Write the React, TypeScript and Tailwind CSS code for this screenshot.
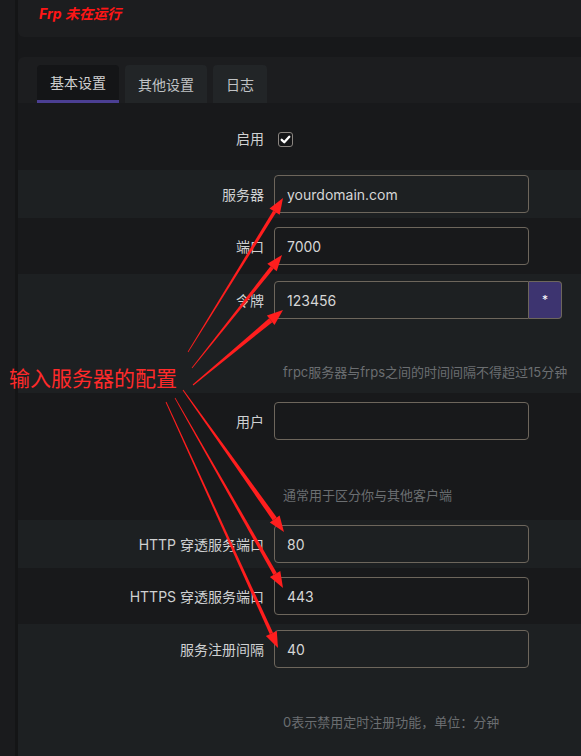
import type { ReactNode } from "react";
import clsx from "clsx";

type Pt = [number, number];

// annotation arrows: start of the tapered shaft, tip of the head
const arrows: { s: Pt; t: Pt; w0: number; w1: number }[] = [
  { s: [188, 352], t: [283, 198], w0: 0.8, w1: 3.5 },
  { s: [192, 368], t: [282, 255], w0: 0.8, w1: 4 },
  { s: [193, 385], t: [283, 310], w0: 1, w1: 5 },
  { s: [183, 390], t: [284, 532], w0: 1, w1: 5 },
  { s: [175, 398], t: [283, 588], w0: 0.8, w1: 4 },
  { s: [166, 402], t: [278, 648], w0: 0.8, w1: 3.5 },
];

function arrowPolys(s: Pt, t: Pt, w0: number, w1: number) {
  const dx = t[0] - s[0];
  const dy = t[1] - s[1];
  const len = Math.hypot(dx, dy);
  const ux = dx / len;
  const uy = dy / len;
  const nx = -uy;
  const ny = ux;
  const head = 16;
  const hw = 6;
  const bx = t[0] - ux * head;
  const by = t[1] - uy * head;
  const p = (x: number, y: number) => `${x.toFixed(1)},${y.toFixed(1)}`;
  const shaft = [
    p(s[0] + (nx * w0) / 2, s[1] + (ny * w0) / 2),
    p(bx + (nx * w1) / 2, by + (ny * w1) / 2),
    p(bx - (nx * w1) / 2, by - (ny * w1) / 2),
    p(s[0] - (nx * w0) / 2, s[1] - (ny * w0) / 2),
  ].join(" ");
  const tip = [p(t[0], t[1]), p(bx + nx * hw, by + ny * hw), p(bx - nx * hw, by - ny * hw)].join(" ");
  return { shaft, tip };
}

interface RowProps {
  label: string;
  light?: boolean;
  className: string;
  hint?: string;
  hintClass?: string;
  children: ReactNode;
}

function Row({ label, light, className, hint, hintClass, children }: RowProps) {
  return (
    <div className={clsx("flex items-start", light ? "bg-[#1d2022]" : "bg-[#18191b]", className)}>
      <div className="w-[256px] shrink-0 pr-[10px] h-[38px] flex items-center justify-end text-[14px] text-[#cfd1d2]">
        {label}
      </div>
      <div className="w-[290px]">
        {children}
        {hint && (
          <div className={clsx("pl-[9px] whitespace-nowrap text-[13px] leading-[20px] text-[#6b6e71]", hintClass)}>
            {hint}
          </div>
        )}
      </div>
    </div>
  );
}

function TextField({ value, className }: { value: string; className?: string }) {
  return (
    <input
      readOnly
      defaultValue={value}
      className={clsx(
        "w-[255px] h-[38px] border border-[#6d665c] rounded-[4px] bg-transparent px-[12px] text-[14px] text-[#d6d6d6] outline-none",
        className
      )}
    />
  );
}

export default function App() {
  return (
    <div className="relative flex min-h-[756px] overflow-hidden bg-[#17181a] font-[Inter,'Noto_Sans_CJK_SC',sans-serif]">
      <div className="w-[18px] shrink-0 bg-[#1a1b1d] border-r-[3px] border-[#141516]" />

      <div className="flex-1 flex flex-col">
        <div className="h-[37px] bg-[#1c1d1f] rounded-bl-[6px] pl-[21px] pt-[1px]">
          <span className="text-[14px] leading-[22px] font-bold italic text-[#ff1616]">Frp 未在运行</span>
        </div>

        <div className="mt-[20px] flex-1 flex flex-col bg-[#1c1d1f] rounded-tl-[6px]">
          <div className="flex gap-[6px] pt-[8px] pl-[19px]">
            <div className="h-[38px] px-[13px] flex items-center rounded-t-[4px] bg-[#141517] border-b-[3px] border-[#4b3f93] text-[14px] text-[#d0d0d0]">
              基本设置
            </div>
            <div className="h-[38px] px-[13px] flex items-center rounded-t-[4px] bg-[#222527] text-[14px] text-[#c0c3c5]">
              其他设置
            </div>
            <div className="h-[38px] px-[13px] flex items-center rounded-t-[4px] bg-[#222527] text-[14px] text-[#c0c3c5]">
              日志
            </div>
          </div>

          <div className="flex-1 flex flex-col">
            <Row label="启用" className="pt-[16px] pb-[13px]">
              <div className="h-[38px] flex items-center pl-[4px] pt-[2px]">
                <div className="w-[15px] h-[15px] rounded-[3px] border border-[#8a8580] bg-[#141517] flex items-center justify-center">
                  <svg viewBox="0 0 16 16" className="w-[11px] h-[11px]">
                    <path d="M2.5 8.5 L6.2 12 L13.5 4" fill="none" stroke="#ffffff" strokeWidth="3.4" strokeLinecap="round" strokeLinejoin="round" />
                  </svg>
                </div>
              </div>
            </Row>

            <Row label="服务器" light className="py-[5px]">
              <TextField value="yourdomain.com" />
            </Row>

            <Row label="端口" className="py-[9px]">
              <TextField value="7000" />
            </Row>

            <Row
              label="令牌"
              light
              className="pt-[7px] pb-[11px]"
              hint="frpc服务器与frps之间的时间间隔不得超过15分钟"
              hintClass="mt-[43px]"
            >
              <div className="flex">
                <TextField value="123456" className="rounded-r-none" />
                <div className="w-[33px] h-[38px] flex items-center justify-center bg-[#3d3470] border border-l-0 border-[#6d665c] rounded-r-[4px] text-[12px] text-white">
                  *
                </div>
              </div>
            </Row>

            <Row label="用户" className="pt-[9px] pb-[15px]" hint="通常用于区分你与其他客户端" hintClass="mt-[45px]">
              <TextField value="" />
            </Row>

            <Row label="HTTP 穿透服务端口" light className="py-[5px]">
              <TextField value="80" />
            </Row>

            <Row label="HTTPS 穿透服务端口" className="py-[9px]">
              <TextField value="443" />
            </Row>

            <Row
              label="服务注册间隔"
              light
              className="flex-1 pt-[6px] pb-[24px]"
              hint="0表示禁用定时注册功能，单位：分钟"
              hintClass="mt-[44px]"
            >
              <TextField value="40" />
            </Row>
          </div>
        </div>
      </div>

      {/* red annotation drawn over the form */}
      <svg className="pointer-events-none absolute inset-0 w-[581px] h-[756px]" viewBox="0 0 581 756">
        {arrows.map((a, i) => {
          const { shaft, tip } = arrowPolys(a.s, a.t, a.w0, a.w1);
          return (
            <g key={i} fill="#ff1e1e">
              <polygon points={shaft} />
              <polygon points={tip} />
            </g>
          );
        })}
      </svg>
      <div className="pointer-events-none absolute left-[9px] top-[365px] text-[21px] leading-[24px] text-[#ff2a2a] font-['Noto_Sans_CJK_SC',sans-serif]">
        输入服务器的配置
      </div>
    </div>
  );
}
